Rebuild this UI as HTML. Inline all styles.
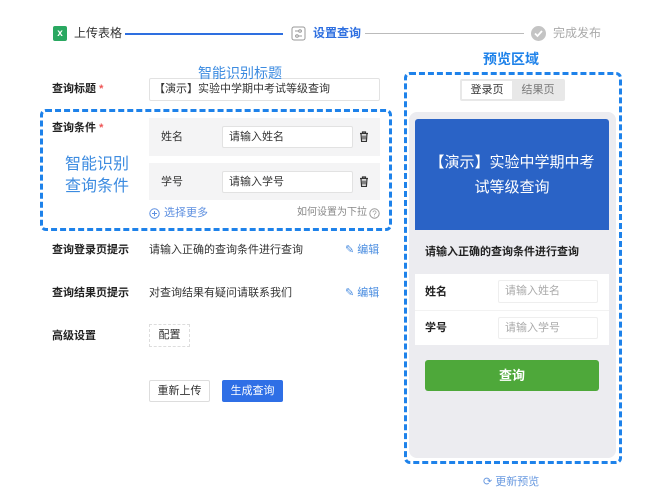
<!DOCTYPE html><html><head><meta charset="utf-8"><style>
*{margin:0;padding:0;box-sizing:border-box}
body{width:662px;height:500px;background:#fff;font-family:"Liberation Sans","Noto Sans CJK SC",sans-serif;position:relative;overflow:hidden;color:#333;line-height:1}
.a{position:absolute;white-space:nowrap}
.lbl{font-size:11px;font-weight:bold;color:#222}
.in{position:absolute;background:#fff;border:1px solid #e2e2e2;border-radius:2px;font-size:11px;padding-left:6px;display:flex;align-items:center}
.red{color:#e55}
.dash{position:absolute;border:3px dashed #1e82ea;border-radius:6px}
</style></head><body>
<!-- steps -->
<div class="a" style="left:53px;top:26px;width:14px;height:15px;background:#2aa861;border-radius:2px;color:#fff;font-size:10px;font-weight:bold;text-align:center;line-height:15px">x</div>
<div class="a" style="left:74px;top:27px;font-size:12px;color:#333">上传表格</div>
<div class="a" style="left:125px;top:33px;width:158px;height:2px;background:#2e6fe0"></div>
<svg class="a" style="left:291px;top:26px" width="15" height="15" viewBox="0 0 15 15"><rect x="1" y="1" width="13" height="13" rx="2" fill="none" stroke="#999"/><line x1="4" y1="5" x2="11" y2="5" stroke="#999"/><line x1="4" y1="10" x2="11" y2="10" stroke="#999"/><circle cx="9" cy="5" r="1.3" fill="#fff" stroke="#999"/><circle cx="6" cy="10" r="1.3" fill="#fff" stroke="#999"/></svg>
<div class="a" style="left:313px;top:27px;font-size:12px;color:#2e6fe0;font-weight:bold">设置查询</div>
<div class="a" style="left:365px;top:33px;width:159px;height:1px;background:#bbb"></div>
<svg class="a" style="left:531px;top:26px" width="15" height="15"><circle cx="7.5" cy="7.5" r="7.5" fill="#c4c4c4"/><path d="M4 7.5l2.5 2.5 4.5-5" stroke="#fff" stroke-width="1.8" fill="none"/></svg>
<div class="a" style="left:553px;top:27px;font-size:12px;color:#aaa">完成发布</div>

<div class="a" style="left:483px;top:52px;font-size:14px;font-weight:bold;color:#1e82ea">预览区域</div>

<!-- title -->
<div class="a lbl" style="left:52px;top:84px">查询标题 <span class="red">*</span></div>
<div class="in" style="left:149px;top:78px;width:231px;height:23px;padding-left:4px">【演示】实验中学期中考试等级查询</div>
<div class="a" style="left:198px;top:66px;font-size:14px;color:#3c8be0">智能识别标题</div>

<div class="dash" style="left:40px;top:109px;width:352px;height:122px"></div>
<div class="a lbl" style="left:52px;top:123px">查询条件 <span class="red">*</span></div>
<div class="a" style="left:149px;top:118px;width:231px;height:38px;background:#f4f4f5"></div>
<div class="a" style="left:149px;top:163px;width:231px;height:37px;background:#f4f4f5"></div>
<div class="a" style="left:161px;top:131.5px;font-size:11px">姓名</div>
<div class="a" style="left:161px;top:176.5px;font-size:11px">学号</div>
<div class="in" style="left:222px;top:126px;width:131px;height:22px">请输入姓名</div>
<div class="in" style="left:222px;top:171px;width:131px;height:22px">请输入学号</div>
<svg class="a" style="left:359px;top:131px" width="10" height="11"><path d="M1 2.5h8M3.5 2.5V1h3v1.5M2 2.5l.6 8h4.8l.6-8M4 4.5v4M6 4.5v4" stroke="#333" stroke-width="1.2" fill="none"/></svg>
<svg class="a" style="left:359px;top:176px" width="10" height="11"><path d="M1 2.5h8M3.5 2.5V1h3v1.5M2 2.5l.6 8h4.8l.6-8M4 4.5v4M6 4.5v4" stroke="#333" stroke-width="1.2" fill="none"/></svg>
<div class="a" style="left:65px;top:154px;font-size:16px;color:#3c8be0;line-height:22px">智能识别<br>查询条件</div>
<svg class="a" style="left:149px;top:208px" width="11" height="11"><circle cx="5.5" cy="5.5" r="4.7" fill="none" stroke="#5d8fe0"/><path d="M3 5.5h5M5.5 3v5" stroke="#5d8fe0"/></svg>
<div class="a" style="left:164px;top:207.5px;font-size:11px;color:#5d8fe0">选择更多</div>
<div class="a" style="left:297px;top:208px;font-size:10px;color:#888">如何设置为下拉</div>
<svg class="a" style="left:369px;top:208px" width="11" height="11"><circle cx="5.5" cy="5.5" r="4.7" fill="none" stroke="#999"/><text x="5.5" y="8.5" font-size="8" text-anchor="middle" fill="#999" font-family="Liberation Sans">?</text></svg>

<div class="a lbl" style="left:52px;top:244.5px">查询登录页提示</div>
<div class="a" style="left:149px;top:244.5px;font-size:11px">请输入正确的查询条件进行查询</div>
<div class="a" style="left:345px;top:244.5px;font-size:11px;color:#4a8de0">✎ 编辑</div>
<div class="a lbl" style="left:52px;top:287.5px">查询结果页提示</div>
<div class="a" style="left:149px;top:287.5px;font-size:11px">对查询结果有疑问请联系我们</div>
<div class="a" style="left:345px;top:287.5px;font-size:11px;color:#4a8de0">✎ 编辑</div>
<div class="a lbl" style="left:52px;top:330.5px">高级设置</div>
<div class="a" style="left:149px;top:324px;width:41px;height:23px;border:1px dashed #ddd;font-size:11px;text-align:center;line-height:21px">配置</div>
<div class="a" style="left:149px;top:380px;width:61px;height:22px;border:1px solid #ddd;border-radius:2px;font-size:11px;text-align:center;line-height:20px">重新上传</div>
<div class="a" style="left:222px;top:380px;width:61px;height:22px;background:#2f6fe6;border-radius:2px;font-size:11px;color:#fff;text-align:center;line-height:22px">生成查询</div>

<!-- preview -->
<div class="dash" style="left:404px;top:72px;width:218px;height:392px"></div>
<div class="a" style="left:460px;top:79px;width:105px;height:22px;background:#e8e8e8;border-radius:2px"></div>
<div class="a" style="left:462px;top:81px;width:50px;height:18px;background:#fff;font-size:11px;text-align:center;line-height:18px">登录页</div>
<div class="a" style="left:512px;top:81px;width:52px;height:18px;font-size:11px;color:#777;text-align:center;line-height:18px">结果页</div>
<div class="a" style="left:409px;top:112px;width:207px;height:346px;background:#ececf0;border-radius:8px"></div>
<div class="a" style="left:415px;top:119px;width:194px;height:111px;background:#2a63c6;border-radius:3px 3px 0 0;color:#fff;font-size:15px;text-align:center;line-height:25px;padding-top:31px">【演示】实验中学期中考<br>试等级查询</div>
<div class="a" style="left:425px;top:246.5px;font-size:11px;font-weight:bold;color:#222">请输入正确的查询条件进行查询</div>
<div class="a" style="left:415px;top:274px;width:194px;height:71px;background:#fff"></div>
<div class="a" style="left:415px;top:310px;width:194px;height:1px;background:#f2f2f2"></div>
<div class="a lbl" style="left:425px;top:286.5px">姓名</div>
<div class="a lbl" style="left:425px;top:322.5px">学号</div>
<div class="in" style="left:498px;top:280px;width:100px;height:23px;color:#aaa;border-color:#eee">请输入姓名</div>
<div class="in" style="left:498px;top:317px;width:100px;height:22px;color:#aaa;border-color:#eee">请输入学号</div>
<div class="a" style="left:425px;top:360px;width:174px;height:31px;background:#4ea83a;border-radius:3px;color:#fff;font-size:13px;font-weight:bold;text-align:center;line-height:31px">查询</div>
<div class="a" style="left:483px;top:476.5px;font-size:11px;color:#6a9ae0">⟳ 更新预览</div>
</body></html>
